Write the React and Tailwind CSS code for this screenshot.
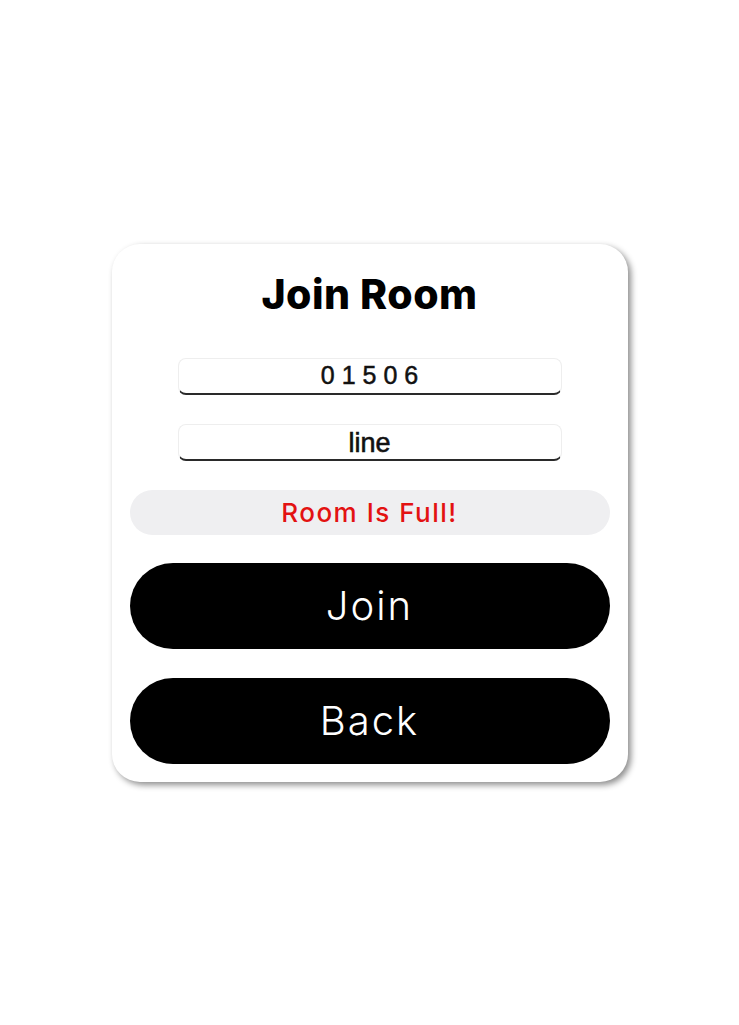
import React, { useState } from "react";

export default function App() {
  const [roomId, setRoomId] = useState("01506");
  const [name, setName] = useState("line");

  return (
    <div className="min-h-screen bg-white flex items-center justify-center">
      <div className="w-[516px] bg-white rounded-[28px] shadow-[3px_3px_6px_rgba(0,0,0,0.45)] px-[18px] pt-[26px] pb-[18px] flex flex-col items-center">
        <h1 className="text-[41px] leading-[48px] font-extrabold text-black tracking-[0.5px] font-['Inter',sans-serif]">
          Join Room
        </h1>

        <input
          value={roomId}
          onChange={(e) => setRoomId(e.target.value)}
          className="mt-[40px] w-[384px] h-[37px] rounded-lg border border-[#eeeeee] border-b-2 border-b-[#2a2a2a] bg-white text-center text-[25px] font-normal [-webkit-text-stroke:0.5px_#111] tracking-[7px] pl-[7px] text-[#111] outline-none font-['Liberation_Sans',Arial,sans-serif]"
        />

        <input
          value={name}
          onChange={(e) => setName(e.target.value)}
          className="mt-[29px] w-[384px] h-[37px] rounded-lg border border-[#eeeeee] border-b-2 border-b-[#2a2a2a] bg-white text-center text-[27px] font-normal [-webkit-text-stroke:0.6px_#111] text-[#111] outline-none pt-[4px] font-['Liberation_Sans',Arial,sans-serif]"
        />

        <div className="mt-[29px] w-full h-[45px] rounded-full bg-[#efeff1] flex items-center justify-center">
          <span className="text-[26px] font-medium tracking-[1.5px] text-[#e31212] font-['Inter',sans-serif]">
            Room Is Full!
          </span>
        </div>

        <button className="mt-[28px] w-full h-[86px] rounded-full bg-black text-white text-[40px] tracking-[2px] font-light font-['Inter',sans-serif]">
          Join
        </button>

        <button className="mt-[29px] w-full h-[86px] rounded-full bg-black text-white text-[40px] tracking-[2px] font-light font-['Inter',sans-serif]">
          Back
        </button>
      </div>
    </div>
  );
}
